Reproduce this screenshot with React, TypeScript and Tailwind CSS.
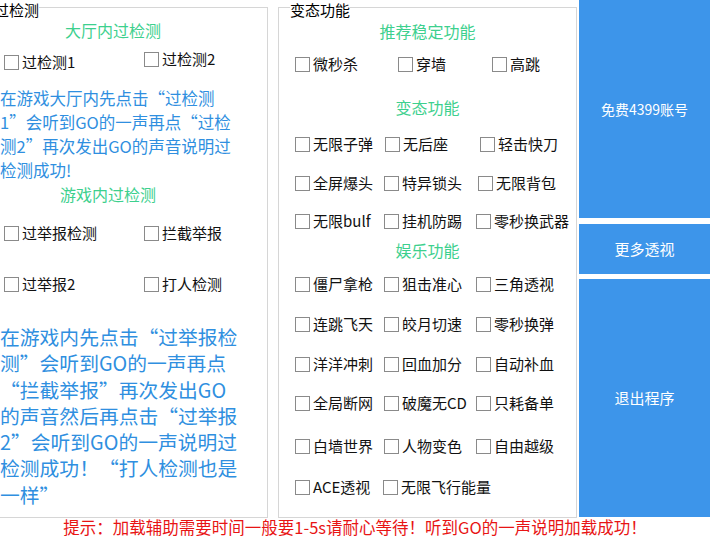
import React from "react";

function Cb({ label }: { label: string }) {
  return (
    <div className="flex items-center h-[20px]">
      <span className="w-[15px] h-[15px] border border-[#8a8a8a] bg-white shrink-0" />
      <span className="ml-[3px] text-[15px] leading-[20px] text-[#111] whitespace-nowrap">{label}</span>
    </div>
  );
}

function Row({ items, cols, mt }: { items: string[]; cols: string; mt: string }) {
  return (
    <div className={`grid pl-[16px] ${cols} ${mt}`}>
      {items.map((t) => (
        <Cb key={t} label={t} />
      ))}
    </div>
  );
}

const C3 = "grid-cols-[89px_92px_auto]";

export default function App() {
  const para1 = [
    "在游戏大厅内先点击“过检测",
    "1”会听到GO的一声再点“过检",
    "测2”再次发出GO的声音说明过",
    "检测成功!",
  ];
  const para2 = [
    "在游戏内先点击“过举报检",
    "测”会听到GO的一声再点",
    "“拦截举报”再次发出GO",
    "的声音然后再点击“过举报",
    "2”会听到GO的一声说明过",
    "检测成功！“打人检测也是",
    "一样”",
  ];
  return (
    <div className="w-[710px] h-[536px] overflow-hidden bg-white relative font-['Microsoft_YaHei','Noto_Sans_CJK_SC',sans-serif]">
      <div className="flex h-[518px]">
        {/* left group */}
        <div className="ml-[-4px] mt-[7px] w-[272px] h-[511px] border border-[#d6d6d6] relative shrink-0">
          <div className="absolute top-[-7px] left-[-3px] bg-white text-[15px] leading-[17px] text-black">过检测</div>
          <div className="pl-[68px] mt-[12px] h-[20px] text-[16px] leading-[20px] text-[#3dd08e]">大厅内过检测</div>
          <div className="grid grid-cols-[140px_auto] pl-[7px] mt-[12px]">
            <Cb label="过检测1" />
            <div className="-mt-[3px]"><Cb label="过检测2" /></div>
          </div>
          <div className="mt-[14px] pl-[3px] text-[16.5px] leading-[24px] text-[#2f8fe0]">
            {para1.map((l) => (
              <div key={l} className="whitespace-nowrap">{l}</div>
            ))}
          </div>
          <div className="pl-[63px] mt-[2px] h-[20px] text-[16px] leading-[20px] text-[#3dd08e]">游戏内过检测</div>
          <div className="grid grid-cols-[140px_auto] pl-[7px] mt-[19px]">
            <Cb label="过举报检测" />
            <Cb label="拦截举报" />
          </div>
          <div className="grid grid-cols-[140px_auto] pl-[7px] mt-[31px]">
            <Cb label="过举报2" />
            <Cb label="打人检测" />
          </div>
          <div className="mt-[30px] pl-[3px] text-[19.8px] leading-[26.3px] text-[#2f8fe0]">
            {para2.map((l) => (
              <div key={l} className="whitespace-nowrap">{l}</div>
            ))}
          </div>
        </div>

        {/* middle group */}
        <div className="ml-[10px] mt-[7px] w-[299px] h-[511px] border border-[#d6d6d6] relative shrink-0">
          <div className="absolute top-[-7px] left-[11px] bg-white text-[15px] leading-[17px] text-black">变态功能</div>
          <div className="mt-[13px] h-[20px] text-center text-[16px] leading-[20px] text-[#3dd08e]">推荐稳定功能</div>
          <Row items={["微秒杀", "穿墙", "高跳"]} cols="grid-cols-[103px_94px_auto]" mt="mt-[13px]" />
          <div className="mt-[23px] h-[20px] text-center text-[16px] leading-[20px] text-[#3dd08e]">变态功能</div>
          <Row items={["无限子弹", "无后座", "轻击快刀"]} cols="grid-cols-[90px_95px_auto]" mt="mt-[17px]" />
          <Row items={["全屏爆头", "特异锁头", "无限背包"]} cols="grid-cols-[89px_94px_auto]" mt="mt-[19px]" />
          <Row items={["无限bulf", "挂机防踢", "零秒换武器"]} cols="grid-cols-[89px_92px_auto]" mt="mt-[18px]" />
          <div className="mt-[9px] h-[20px] text-center text-[16px] leading-[20px] text-[#3dd08e]">娱乐功能</div>
          <Row items={["僵尸拿枪", "狙击准心", "三角透视"]} cols={C3} mt="mt-[14px]" />
          <Row items={["连跳飞天", "皎月切速", "零秒换弹"]} cols={C3} mt="mt-[20px]" />
          <Row items={["洋洋冲刺", "回血加分", "自动补血"]} cols={C3} mt="mt-[20px]" />
          <Row items={["全局断网", "破魔无CD", "只耗备单"]} cols={C3} mt="mt-[19px]" />
          <Row items={["白墙世界", "人物变色", "自由越级"]} cols={C3} mt="mt-[23px]" />
          <Row items={["ACE透视", "无限飞行能量"]} cols="grid-cols-[88px_auto]" mt="mt-[21px]" />
        </div>

        {/* right buttons */}
        <div className="ml-[2px] flex-1 flex flex-col h-[517px]">
          <div className="h-[218px] bg-[#3d95ea] flex items-center justify-center text-white text-[14px]">免费4399账号</div>
          <div className="h-[6px] bg-white" />
          <div className="h-[50px] bg-[#3d95ea] flex items-center justify-center text-white text-[15px]">更多透视</div>
          <div className="h-[5px] bg-white" />
          <div className="flex-1 bg-[#3d95ea] flex items-center justify-center text-white text-[15px]">退出程序</div>
        </div>
      </div>
      <div className="text-center text-[16.5px] leading-[18px] text-[#e81414] whitespace-nowrap">
        提示：加载辅助需要时间一般要1-5s请耐心等待！听到GO的一声说明加载成功！
      </div>
    </div>
  );
}
